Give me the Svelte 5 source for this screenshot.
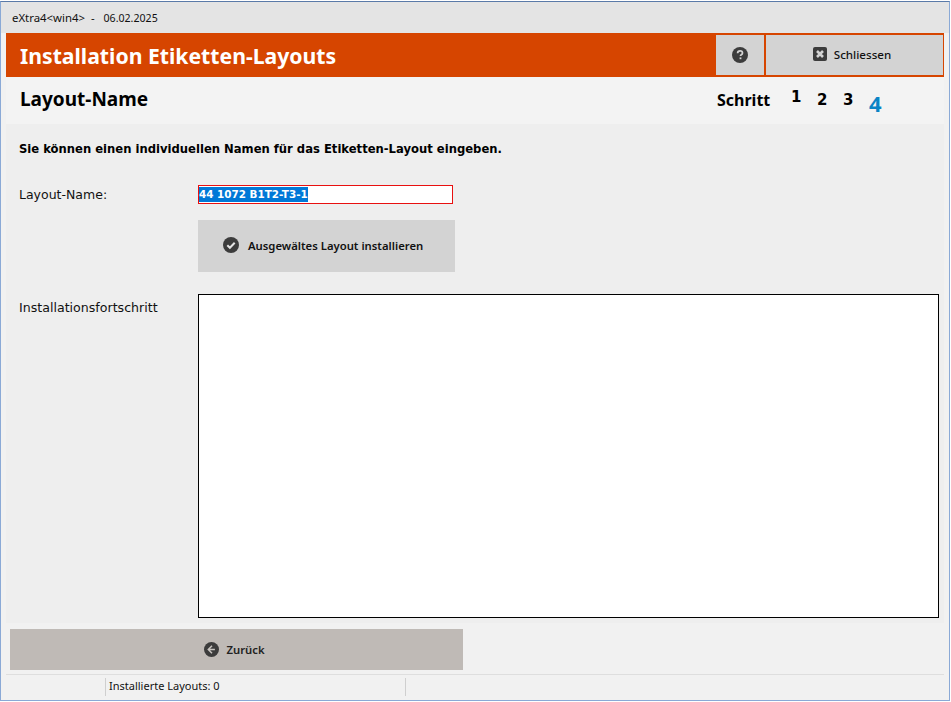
<script>
  const steps = [
    { n: '1', cls: 's1' },
    { n: '2', cls: 's2' },
    { n: '3', cls: 's3' },
    { n: '4', cls: 's4' }
  ];
</script>

<div class="window">
  <div class="titlebar">eXtra4&lt;win4&gt;&nbsp;&nbsp;-&nbsp;&nbsp;&nbsp;<span class="date">06.02.2025</span></div>
  <div class="inner">
    <header class="head">
      <h1>Installation Etiketten-Layouts</h1>
      <button class="hbtn help" aria-label="Hilfe">
        <svg width="16" height="16" viewBox="0 0 16 16"><circle cx="8" cy="8" r="8" fill="#3c3c3c"/><path d="M5.6 6.2c0-1.5 1.1-2.4 2.5-2.4s2.4.9 2.4 2.1c0 1-.6 1.5-1.2 1.9-.5.3-.8.6-.8 1.2" fill="none" stroke="#d3d3d3" stroke-width="1.7"/><rect x="7.6" y="10.4" width="1.8" height="1.8" fill="#d3d3d3"/></svg>
      </button>
      <button class="hbtn close">
        <svg width="14" height="14" viewBox="0 0 14 14"><rect width="14" height="14" rx="2" fill="#3c3c3c"/><path d="M4 4l6 6M10 4l-6 6" stroke="#d3d3d3" stroke-width="2.6"/></svg>
        Schliessen
      </button>
    </header>
    <div class="sub">
      <h2>Layout-Name</h2>
      <div class="steps">
        <span class="schritt">Schritt</span>
        {#each steps as s}
          <span class={s.cls}>{s.n}</span>
        {/each}
      </div>
    </div>
    <main class="content">
      <p class="intro">Sie können einen individuellen Namen für das Etiketten-Layout eingeben.</p>
      <div class="row namerow">
        <span class="lbl">Layout-Name:</span>
        <div class="field"><span class="sel">44 1072 B1T2-T3-1</span></div>
      </div>
      <button class="install">
        <svg width="16" height="16" viewBox="0 0 16 16"><circle cx="8" cy="8" r="8" fill="#3c3c3c"/><path d="M4.3 8.2l2.6 2.6 4.8-5" fill="none" stroke="#e4e4e4" stroke-width="2"/></svg>
        Ausgewältes Layout installieren
      </button>
      <div class="row progress">
        <span class="lbl prog">Installationsfortschritt</span>
        <div class="box"></div>
      </div>
    </main>
    <div class="back">
      <button class="zurueck">
        <svg width="15" height="15" viewBox="0 0 15 15"><circle cx="7.5" cy="7.5" r="7.5" fill="#3c3c3c"/><path d="M8 3.8L4.3 7.5 8 11.2M4.5 7.5h6.4" fill="none" stroke="#c9c5c1" stroke-width="1.5"/></svg>
        Zurück
      </button>
    </div>
    <footer class="status">
      <span class="cell">Installierte Layouts: 0</span>
    </footer>
  </div>
</div>

<style>
  :global(body) { margin: 0; background: #fff; }
  .window {
    box-sizing: border-box;
    width: 950px;
    height: 700px;
    margin-top: 1px;
    display: flex;
    flex-direction: column;
    border: 1px solid #8aa9d6;
    border-top-color: #5a7aa8;
    background: #f1f1f1;
    font-family: "Noto Sans", sans-serif;
    color: #000;
    overflow: hidden;
  }
  .titlebar {
    height: 31px;
    flex: none;
    background: #e4e4e4;
    padding: 0 0 0 11px;
    line-height: 31px;
    font-size: 11.4px;
    color: #111;
  }
  .date { font-size: 10.6px; }
  .inner {
    flex: 1;
    display: flex;
    flex-direction: column;
    padding: 0 5px;
    min-height: 0;
  }
  .head {
    height: 44px;
    flex: none;
    display: flex;
    background: #d64500;
    box-sizing: border-box;
    padding: 2px 0;
  }
  h1 {
    flex: 1;
    margin: 0;
    padding-left: 14px;
    color: #fff;
    font-size: 21.2px;
    line-height: 42px;
    font-weight: 700;
  }
  .hbtn {
    border: 0;
    background: #d3d3d3;
    padding: 0;
    display: flex;
    align-items: center;
    justify-content: center;
    font-family: "Noto Sans", sans-serif;
    font-size: 11.6px;
    font-weight: 500;
    color: #111;
  }
  .help { width: 48px; }
  .close { width: 177px; margin: 0 1px 0 2px; gap: 7px; padding: 0 5px 2px 0; }
  .sub {
    height: 47px;
    flex: none;
    display: flex;
    justify-content: space-between;
    background: #f3f3f3;
  }
  h2 {
    margin: 0;
    padding-left: 14px;
    font-size: 19px;
    line-height: 45px;
    font-weight: 700;
  }
  .steps {
    display: flex;
    width: 227px;
    font-weight: 700;
    line-height: 46px;
    font-size: 16px;
  }
  .schritt { width: 74px; }
  .s1, .s2, .s3 { width: 26px; font-family: "DejaVu Sans", sans-serif; font-size: 15px; }
  .s1 { line-height: 41px; }
  .s2, .s3 { line-height: 47px; }
  .s4 { color: #0a84c6; font-size: 22px; line-height: 52px; }
  .content {
    flex: 1;
    min-height: 0;
    background: #eeeeee;
    padding: 0 5px 5px 13px;
    display: flex;
    flex-direction: column;
  }
  .intro {
    margin: 16px 0 0;
    font-family: "DejaVu Sans", sans-serif;
    font-weight: 700;
    font-size: 11.6px;
    line-height: 18px;
  }
  .row { display: flex; }
  .lbl {
    width: 179px;
    flex: none;
    font-family: "DejaVu Sans", sans-serif;
    font-size: 12.5px;
    color: #111;
  }
  .namerow { margin-top: 26px; align-items: center; height: 20px; }
  .field {
    box-sizing: border-box;
    width: 255px;
    height: 19px;
    border: 1px solid #e81010;
    background: #fff;
    display: flex;
    align-items: center;
  }
  .sel {
    background: #0078d7;
    color: #fff;
    font-family: "DejaVu Sans", sans-serif;
    font-weight: 700;
    font-size: 10.4px;
    line-height: 15px;
  }
  .install {
    margin: 16px 0 0 179px;
    width: 257px;
    height: 52px;
    flex: none;
    border: 0;
    background: #d3d3d3;
    padding: 0 0 2px 25px;
    display: flex;
    align-items: center;
    gap: 9px;
    font-family: "Noto Sans", sans-serif;
    font-size: 11.3px;
    font-weight: 600;
    color: #111;
  }
  .progress { margin-top: 22px; flex: 1; min-height: 0; }
  .prog { padding-top: 6px; font-size: 12.6px; }
  .box {
    box-sizing: border-box;
    flex: 1;
    background: #fff;
    border: 1px solid #000;
  }
  .back { padding: 6px 0 0 4px; height: 52px; box-sizing: border-box; flex: none; border-bottom: 1px solid #dedede; }
  .zurueck {
    width: 453px;
    height: 41px;
    border: 0;
    background: #bfbab6;
    display: flex;
    align-items: center;
    justify-content: center;
    gap: 7px;
    padding: 0 4px 0 0;
    font-family: "Noto Sans", sans-serif;
    font-size: 11.3px;
    font-weight: 600;
    color: #222;
  }
  .status { height: 25px; flex: none; padding: 3px 0 0 99px; box-sizing: border-box; }
  .cell {
    display: block;
    box-sizing: border-box;
    width: 301px;
    height: 18px;
    line-height: 16px;
    padding-left: 3px;
    border-left: 1px solid #cfcfcf;
    border-right: 1px solid #cfcfcf;
    font-size: 11px;
    color: #111;
  }
</style>
